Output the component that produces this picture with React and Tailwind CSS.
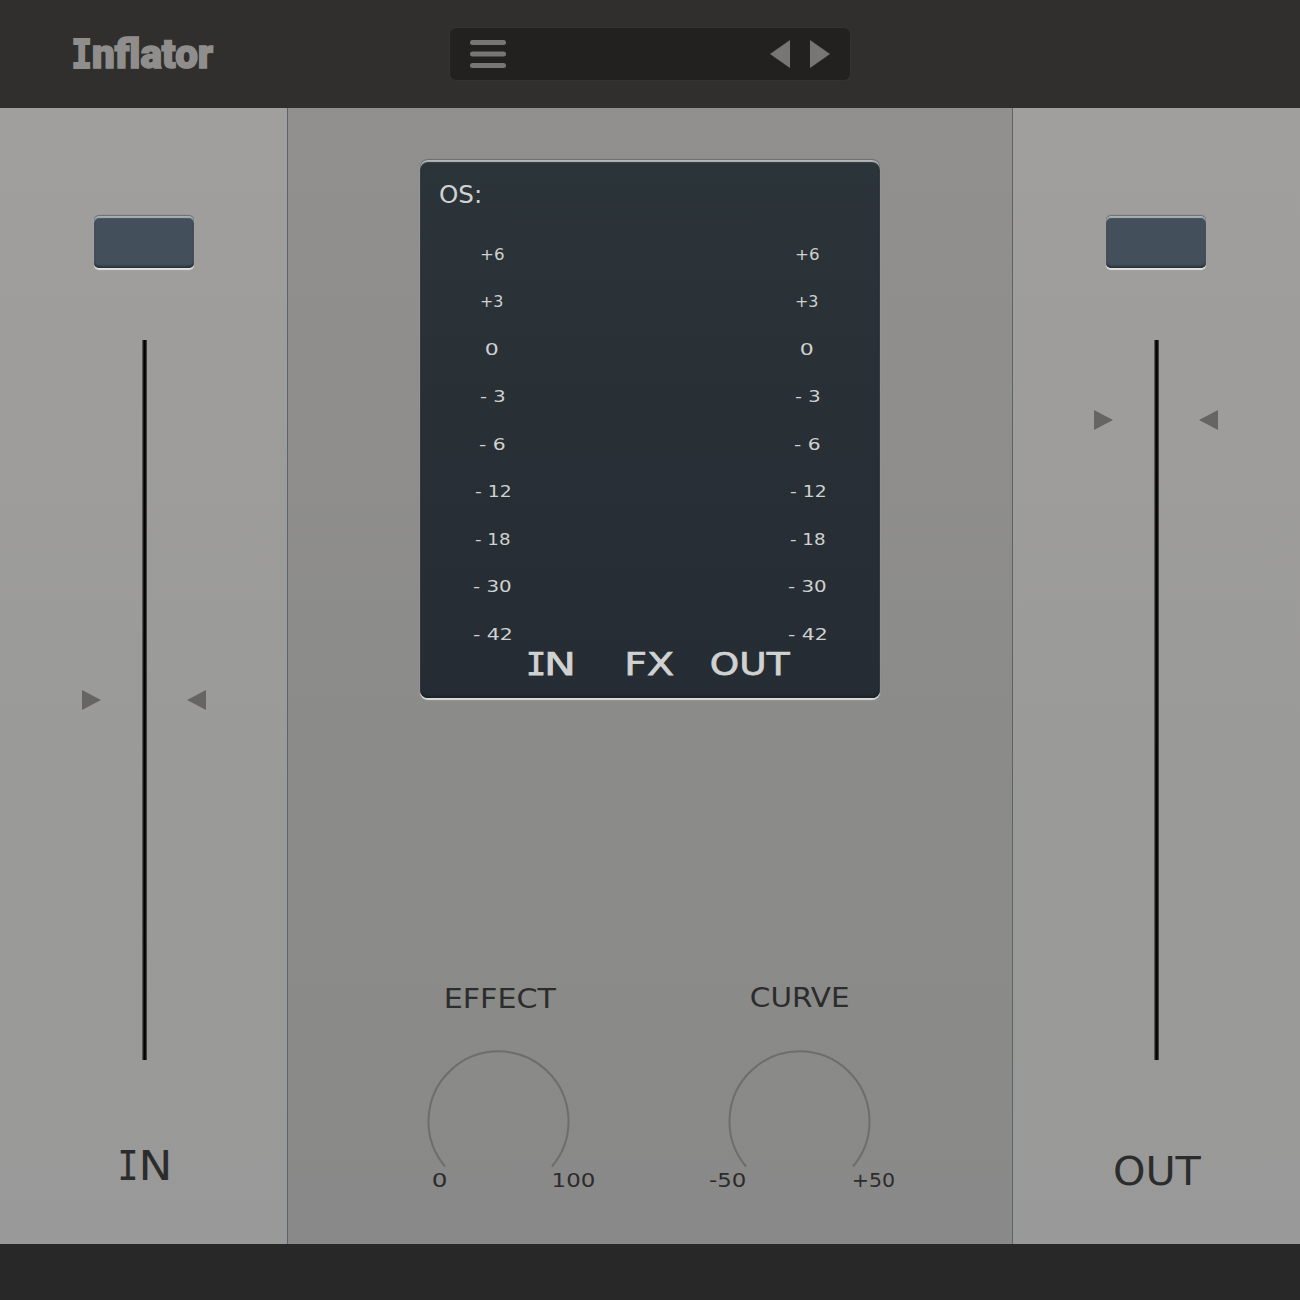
import { useLayoutEffect, useRef, useState } from "react";
import clsx from "clsx";

// Stretches one line of text so that its ink fills the box width.
function Fit({ children, className }) {
  const box = useRef(null);
  const [transform, setTransform] = useState("none");
  useLayoutEffect(() => {
    const ctx = document.createElement("canvas").getContext("2d");
    const s = getComputedStyle(box.current);
    ctx.font = `${s.fontWeight} ${s.fontSize} ${s.fontFamily}`;
    const m = ctx.measureText(children);
    const ink = m.actualBoundingBoxLeft + m.actualBoundingBoxRight;
    const k = box.current.clientWidth / ink;
    setTransform(`translateX(${m.actualBoundingBoxLeft * k}px) scaleX(${k})`);
  }, [children]);
  return (
    <div ref={box} className={clsx("shrink-0 whitespace-pre", className)}>
      <span className="inline-block origin-left" style={{ transform }}>{children}</span>
    </div>
  );
}

const MONO = "font-['DejaVu_Sans_Mono',monospace]";

function Pointer({ left, className }) {
  return (
    <svg width="19" height="20" viewBox="0 0 19 20" className={clsx("shrink-0", className)}>
      <path d={left ? "M19 0V20L0 10Z" : "M0 0V20L19 10Z"} fill="#666563" />
    </svg>
  );
}

function Channel({ pad, mark, children }) {
  return (
    <section className="flex h-full flex-1 flex-col bg-linear-to-b from-[#a09f9d] via-[#9a9a98] via-60% to-[#999999]">
      <div className={pad}>
        <button className="mt-[108px] ml-3 block h-[52px] w-[100px] rounded-[5px] bg-[#434f5a] shadow-[0_-1px_1px_0px_#6f6e6c,0_1.5px_1px_0px_#e2e2df,inset_0_2px_1px_#a9b0b4,inset_0_-2px_2px_#27323b]" />
        <div className="mt-[72px] flex h-[720px] items-start">
          <Pointer className={mark} />
          <div className="ml-[41px] mr-10 h-full w-[5px] bg-linear-to-r from-[#777674] via-black to-[#555553]" />
          <Pointer left className={mark} />
        </div>
        {children}
      </div>
    </section>
  );
}

const LEVELS = [
  ["+6", "w-[23px]"],
  ["+3", "w-[22px]"],
  ["0", "w-[12px]"],
  ["- 3", "w-[25px]"],
  ["- 6", "w-[26px]"],
  ["- 12", "w-[35px]"],
  ["- 18", "w-[35px]"],
  ["- 30", "w-[38px]"],
  ["- 42", "w-[38px]"],
];

function Scale() {
  return (
    <div className="flex w-10 flex-col items-center text-[16.5px] leading-[47.5px]">
      {LEVELS.map(([t, w]) => <Fit key={t} className={w}>{t}</Fit>)}
    </div>
  );
}

function Knob({ title, low, high, titleClass, lowClass, highClass }) {
  return (
    <div className="w-[186px] text-[#2c2c2c]">
      <Fit className={clsx("h-8 text-[26px]", titleClass)}>{title}</Fit>
      <svg width="144" height="120" viewBox="0 0 144 120" className="mt-[35px] ml-[19px]">
        <path d="M19 117.5A70 70 0 1 1 126 117.5" fill="none" stroke="#6d6d6c" strokeWidth="2" />
      </svg>
      <div className="-mt-px flex justify-between text-[19px] leading-6">
        <Fit className={lowClass}>{low}</Fit>
        <Fit className={highClass}>{high}</Fit>
      </div>
    </div>
  );
}

export default function App() {
  return (
    <div className="flex h-[1300px] w-[1300px] flex-col overflow-hidden bg-[#282828] font-['DejaVu_Sans',sans-serif]">
      <header className="flex h-[108px] shrink-0 items-center bg-[#302f2d] pl-[73px]">
        <div className="flex w-[377px] pt-0.5 text-[40px] leading-[54px] text-[#8f8e8c]">
          <Fit className={clsx("ml-px w-4 text-[39px] font-bold [-webkit-text-stroke:2px_#8f8e8c]", MONO)}>I</Fit>
          <Fit className="ml-[3px] w-[120px] font-['Roboto',sans-serif] font-black [-webkit-text-stroke:1.5px_#8f8e8c]">nflator</Fit>
        </div>
        <div className="flex h-[52px] w-[400px] items-center justify-between rounded-md bg-[#22211f] px-5 shadow-[0_0_0_1px_#343331]">
          <svg width="36" height="28" viewBox="0 0 36 28" fill="#777674">
            <rect width="36" height="5" rx="2.5" />
            <rect y="11.5" width="36" height="5" rx="2.5" />
            <rect y="23" width="36" height="5" rx="2.5" />
          </svg>
          <svg width="60" height="28" viewBox="0 0 60 28" fill="#777674">
            <path d="M20 0V28L0 14Z" />
            <path d="M40 0V28L60 14Z" />
          </svg>
        </div>
      </header>

      <main className="flex h-[1136px] shrink-0">
        <Channel pad="pl-[82px]" mark="mt-[350px]">
          <div className="mt-[78px] ml-[38px] flex text-[40px] leading-[56px] text-[#2c2c2c]">
            <Fit className={clsx("w-4", MONO)}>I</Fit>
            <Fit className="ml-[6px] w-[26px]">N</Fit>
          </div>
        </Channel>

        <section className="flex w-[726px] flex-col items-center border-x border-[#59646c] bg-linear-to-b from-[#91908e] via-[#8b8b89] via-60% to-[#898989]">
          <div className="mt-[52px] h-[538px] w-[460px] rounded-lg bg-linear-to-b from-[#2b3439] to-[#252c33] text-[#d0d1d1] shadow-[0_-1px_1px_0px_#6f6e6b,0_1.5px_1px_0px_#dcdcd8,inset_0_2px_1px_#b5b7b7,inset_0_-2px_2px_#1a2229]">
            <div className="flex h-[70px] items-center pl-5">
              <Fit className="w-10 text-[24.5px] leading-8">OS:</Fit>
            </div>
            <div className="flex justify-between pt-[0.5px] pr-[53px] pl-[52px]">
              <Scale />
              <Scale />
            </div>
            <div className="-mt-[14.5px] flex pl-[109px] text-[32px] leading-10 [-webkit-text-stroke:0.75px_#d0d1d1]">
              <Fit className={clsx("w-[15px]", MONO)}>I</Fit>
              <Fit className="ml-1 w-6">N</Fit>
              <Fit className="ml-14 w-[45px]">FX</Fit>
              <Fit className="ml-[38px] w-[79px]">OUT</Fit>
            </div>
          </div>
          <div className="mt-[284px] ml-px flex gap-[115px]">
            <Knob title="EFFECT" low="0" high="100" titleClass="ml-[39px] w-[110px] leading-[34px]" lowClass="ml-[26px] w-[13px]" highClass="-mr-px w-10" />
            <Knob title="CURVE" low="-50" high="+50" titleClass="ml-[43px] w-[97px] leading-8" lowClass="ml-px w-9" highClass="w-10" />
          </div>
        </section>

        <Channel pad="pl-[81px]" mark="mt-[70px]">
          <Fit className="mt-[84px] ml-[21px] w-[86px] text-[39px] leading-[56px] text-[#2c2c2c]">OUT</Fit>
        </Channel>
      </main>
    </div>
  );
}
